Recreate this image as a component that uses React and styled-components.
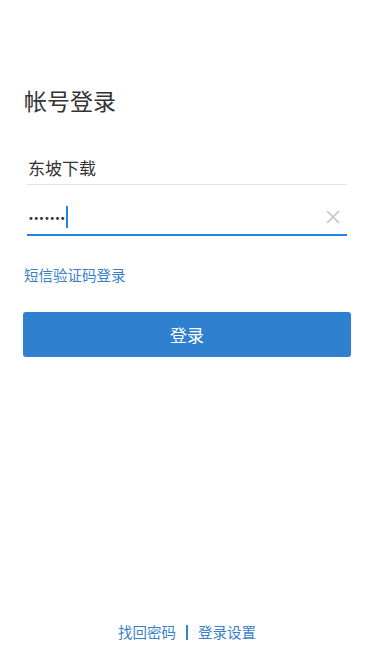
import React from 'react';
import styled, { createGlobalStyle } from 'styled-components';

const GlobalStyle = createGlobalStyle`
  html, body {
    margin: 0;
    padding: 0;
    background: #fff;
  }
  body {
    font-family: "Noto Sans CJK SC", "Noto Sans", sans-serif;
  }
`;

const Page = styled.div`
  min-height: 660px;
  box-sizing: border-box;
  display: flex;
  flex-direction: column;
  padding: 85px 19px 18px 23px;
`;

const Title = styled.h1`
  margin: 0 0 35px 1px;
  font-size: 23px;
  line-height: 30px;
  font-weight: 400;
  color: #333;
`;

const Field = styled.div`
  display: flex;
  align-items: center;
  height: 34px;
  margin: ${p => (p.$first ? '0' : '15px')} 4px 0 4px;
  padding-left: 1px;
  border-bottom: ${p => (p.$active ? '2px solid #1f86e3' : '1px solid #e3e3e3')};
`;

const Value = styled.span`
  flex: 1;
  display: flex;
  align-items: center;
  font-size: 17px;
  color: #333;
`;

const Dots = styled.span`
  font-family: "DejaVu Sans", sans-serif;
  font-size: 10px;
  letter-spacing: -0.6px;
  color: #333;
  margin-top: 2px;
`;

const Caret = styled.span`
  display: inline-block;
  width: 1.5px;
  height: 22px;
  margin-left: 1px;
  background: #1f86e3;
`;

const ClearButton = styled.button`
  border: none;
  background: none;
  padding: 0;
  margin-right: 7px;
  display: flex;
  color: #c4c4c4;
`;

const SmsLink = styled.a`
  margin: 28px 0 0 1px;
  font-size: 14.5px;
  line-height: 22px;
  color: #3a7fc8;
  text-decoration: none;
`;

const LoginButton = styled.button`
  margin-top: 26px;
  height: 45px;
  border: none;
  border-radius: 3px;
  background: #3080d0;
  color: #fff;
  font-family: inherit;
  font-size: 17px;
`;

const Footer = styled.div`
  margin-top: auto;
  display: flex;
  justify-content: center;
  align-items: center;
  gap: 10px;
`;

const FooterLink = styled.a`
  font-size: 14.5px;
  line-height: 20px;
  color: #3a7fc8;
  text-decoration: none;
`;

const Divider = styled.span`
  width: 2px;
  height: 15px;
  background: #3a7fc8;
`;

export default function App() {
  return (
    <>
      <GlobalStyle />
      <Page>
        <Title>帐号登录</Title>
        <Field $first>
          <Value>东坡下载</Value>
        </Field>
        <Field $active>
          <Value>
            <Dots>•••••••</Dots>
            <Caret />
          </Value>
          <ClearButton aria-label="清除">
            <svg width="14" height="14" viewBox="0 0 14 14" fill="none" stroke="currentColor" strokeWidth="1.6">
              <path d="M1 1L13 13M13 1L1 13" />
            </svg>
          </ClearButton>
        </Field>
        <SmsLink href="#">短信验证码登录</SmsLink>
        <LoginButton>登录</LoginButton>
        <Footer>
          <FooterLink href="#">找回密码</FooterLink>
          <Divider />
          <FooterLink href="#">登录设置</FooterLink>
        </Footer>
      </Page>
    </>
  );
}
